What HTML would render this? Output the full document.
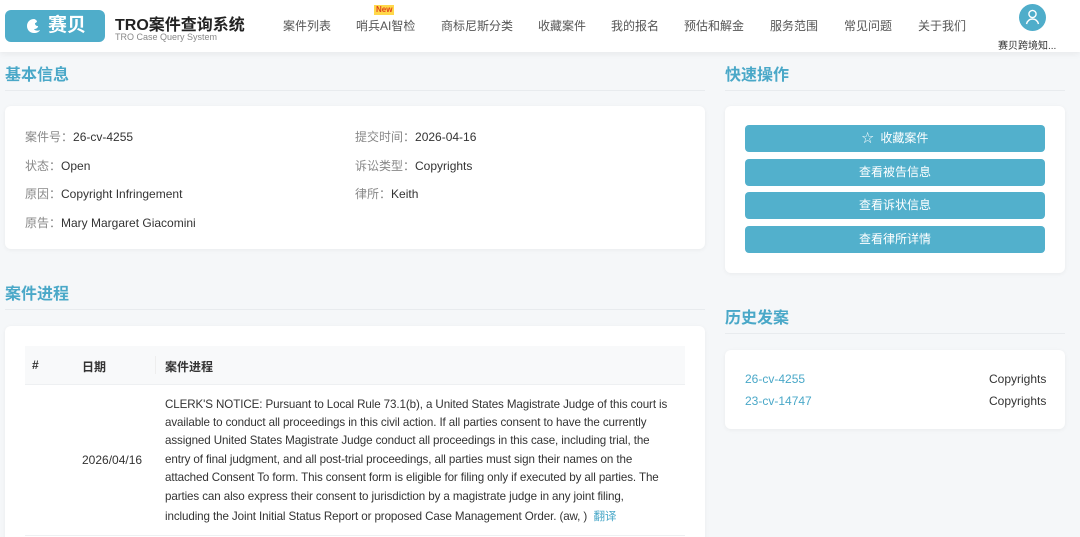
<!DOCTYPE html>
<html><head><meta charset="utf-8"><style>
*{margin:0;padding:0;box-sizing:border-box}
html,body{width:1080px;height:537px;overflow:hidden}
body{background:#f5f7f9;font-family:"Liberation Sans","Noto Sans CJK SC",sans-serif;color:#333;position:relative}
.abs{position:absolute;white-space:nowrap}
.hdr{position:absolute;left:0;top:0;width:1080px;height:52px;background:#fff;box-shadow:0 2px 6px rgba(0,0,0,.06)}
.nav{font-size:12px;color:#555;top:17px}
.ttl{font-size:16px;font-weight:bold;color:#4aa8c8}
.card{position:absolute;background:#fff;border-radius:6px;box-shadow:0 1px 5px rgba(0,0,0,.05)}
.hr{position:absolute;height:1px;background:#e8ebee}
.lbl{color:#888}
.f12{font-size:12px}
.btn{position:absolute;left:745px;width:300px;height:27px;background:#52b0cc;border-radius:4px;color:#fff;font-size:12px;text-align:center;line-height:27px}
.prog{font-size:11.6px;color:#333;left:165px;letter-spacing:-0.1px}
</style></head><body>
<div class="hdr"></div>
<div class="abs" style="left:5px;top:10px;width:100px;height:32px;background:#4fadca;border-radius:6px;color:#fff;font-size:19px;font-weight:bold;line-height:32px">
<svg width="18" height="18" viewBox="0 0 18 18" style="position:absolute;left:20px;top:7px"><path d="M9 2C5 2 2 5 2 9c0 4 3 7 7 7 3 0 5-1 6-3-2 1-5 1-6-1 2 0 4-1 4-3-2 0-3-1-3-3 1 0 2-1 2-2-1-1-2-2-3-2z" fill="#fff"/></svg>
<span style="position:absolute;left:43px">赛贝</span></div>
<div class="abs" style="left:115px;top:11px;font-size:16px;font-weight:bold;color:#222">TRO案件查询系统</div>
<div class="abs" style="left:115px;top:32px;font-size:9px;color:#888">TRO Case Query System</div>
<div class="abs nav" style="left:283px">案件列表</div>
<div class="abs nav" style="left:356px">哨兵AI智检</div>
<div class="abs" style="left:374px;top:5px;background:#ffd84a;color:#e0431a;font-size:8px;font-weight:bold;padding:0 2px;line-height:10px">New</div>
<div class="abs nav" style="left:441px">商标尼斯分类</div>
<div class="abs nav" style="left:538px">收藏案件</div>
<div class="abs nav" style="left:611px">我的报名</div>
<div class="abs nav" style="left:684px">预估和解金</div>
<div class="abs nav" style="left:770px">服务范围</div>
<div class="abs nav" style="left:844px">常见问题</div>
<div class="abs nav" style="left:918px">关于我们</div>
<div class="abs" style="left:1019px;top:4px;width:27px;height:27px;border-radius:50%;background:#4fadca">
<svg width="27" height="27" viewBox="0 0 27 27"><circle cx="13.5" cy="10" r="3.6" fill="none" stroke="#fff" stroke-width="1.4"/><path d="M7.5 20c1-3.5 3.5-5 6-5s5 1.5 6 5" fill="none" stroke="#fff" stroke-width="1.4"/></svg></div>
<div class="abs" style="left:998px;top:37px;font-size:10px;color:#333">赛贝跨境知...</div>

<div class="abs ttl" style="left:5px;top:61px">基本信息</div>
<div class="hr" style="left:5px;top:90px;width:700px"></div>
<div class="card" style="left:5px;top:106px;width:700px;height:143px"></div>
<div class="abs f12" style="left:25px;top:128px"><span class="lbl">案件号：</span>26-cv-4255</div>
<div class="abs f12" style="left:25px;top:157px"><span class="lbl">状态：</span>Open</div>
<div class="abs f12" style="left:25px;top:185px"><span class="lbl">原因：</span>Copyright Infringement</div>
<div class="abs f12" style="left:25px;top:214px"><span class="lbl">原告：</span>Mary Margaret Giacomini</div>
<div class="abs f12" style="left:355px;top:128px"><span class="lbl">提交时间：</span>2026-04-16</div>
<div class="abs f12" style="left:355px;top:157px"><span class="lbl">诉讼类型：</span>Copyrights</div>
<div class="abs f12" style="left:355px;top:185px"><span class="lbl">律所：</span>Keith</div>

<div class="abs ttl" style="left:5px;top:280px">案件进程</div>
<div class="hr" style="left:5px;top:309px;width:700px"></div>
<div class="card" style="left:5px;top:326px;width:700px;height:230px"></div>
<div class="abs" style="left:25px;top:346px;width:660px;height:38px;background:#f8f9fa"></div>
<div class="abs" style="left:155px;top:356px;width:1px;height:18px;background:#eee"></div>
<div class="abs f12" style="left:32px;top:358px;font-weight:bold">#</div>
<div class="abs f12" style="left:82px;top:358px;font-weight:bold">日期</div>
<div class="abs f12" style="left:165px;top:358px;font-weight:bold">案件进程</div>
<div class="hr" style="left:25px;top:384px;width:660px;background:#eef0f2"></div>
<div class="abs f12" style="left:82px;top:453px">2026/04/16</div>
<div class="abs prog" style="top:398px">CLERK'S NOTICE: Pursuant to Local Rule 73.1(b), a United States Magistrate Judge of this court is</div>
<div class="abs prog" style="top:416px">available to conduct all proceedings in this civil action. If all parties consent to have the currently</div>
<div class="abs prog" style="top:434px">assigned United States Magistrate Judge conduct all proceedings in this case, including trial, the</div>
<div class="abs prog" style="top:453px">entry of final judgment, and all post-trial proceedings, all parties must sign their names on the</div>
<div class="abs prog" style="top:471px">attached Consent To form. This consent form is eligible for filing only if executed by all parties. The</div>
<div class="abs prog" style="top:490px">parties can also express their consent to jurisdiction by a magistrate judge in any joint filing,</div>
<div class="abs prog" style="top:508px">including the Joint Initial Status Report or proposed Case Management Order. (aw, ) &nbsp;<span style="color:#4aa8c8">翻译</span></div>
<div class="hr" style="left:25px;top:535px;width:660px;background:#eef0f2"></div>

<div class="abs ttl" style="left:725px;top:61px">快速操作</div>
<div class="hr" style="left:725px;top:90px;width:340px"></div>
<div class="card" style="left:725px;top:106px;width:340px;height:167px"></div>
<div class="btn" style="top:125px">☆ &nbsp;收藏案件</div>
<div class="btn" style="top:159px">查看被告信息</div>
<div class="btn" style="top:192px">查看诉状信息</div>
<div class="btn" style="top:226px">查看律所详情</div>

<div class="abs ttl" style="left:725px;top:304px">历史发案</div>
<div class="hr" style="left:725px;top:333px;width:340px"></div>
<div class="card" style="left:725px;top:350px;width:340px;height:79px"></div>
<div class="abs f12" style="left:745px;top:372px;color:#4aa8c8">26-cv-4255</div>
<div class="abs f12" style="left:989px;top:372px">Copyrights</div>
<div class="abs f12" style="left:745px;top:394px;color:#4aa8c8">23-cv-14747</div>
<div class="abs f12" style="left:989px;top:394px">Copyrights</div>
</body></html>
